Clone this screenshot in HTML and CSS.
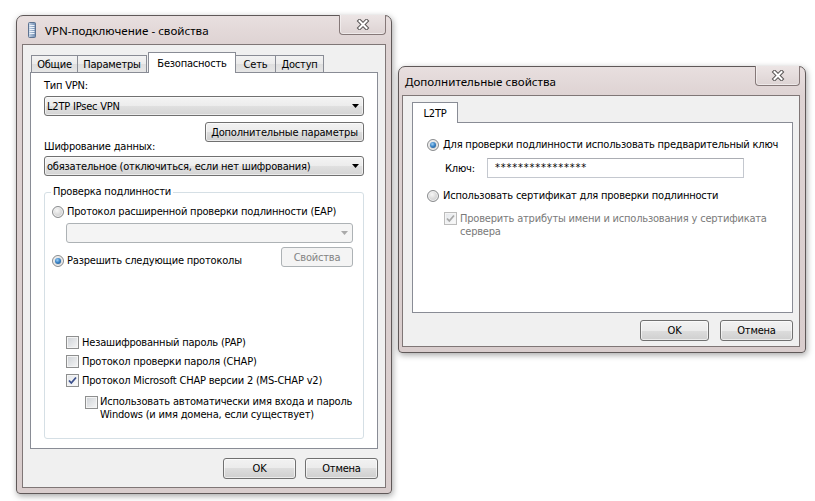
FILE: index.html
```html
<!DOCTYPE html>
<html lang="ru">
<head>
<meta charset="utf-8">
<title>VPN-подключение - свойства</title>
<link rel="stylesheet" href="styles.css">
</head>
<body>
<div class="window win-main">
  <div class="titlebar">
    <svg class="app-icon" width="8" height="16" viewBox="0 0 8 16">
      <defs>
        <linearGradient id="ig" x1="0" y1="0" x2="1" y2="0">
          <stop offset="0" stop-color="#c9d7e8"/>
          <stop offset="1" stop-color="#6d8bb1"/>
        </linearGradient>
      </defs>
      <rect x="0.5" y="0.5" width="7" height="15" rx="1" fill="url(#ig)" stroke="#5d7391"/>
      <path d="M1.5 3.5H6.5M1.5 5.5H6.5M1.5 7.5H6.5M1.5 9.5H6.5M1.5 11.5H6.5" stroke="#eef4fb" stroke-width="1"/>
    </svg>
    <span class="title">VPN-подключение - свойства</span>
    <div class="close-btn">
      <svg width="14" height="11" viewBox="0 0 14 11">
        <path d="M3.5 2 L10.5 9 M10.5 2 L3.5 9" stroke="#5a5656" stroke-width="4" stroke-linecap="square"/>
        <path d="M3.5 2 L10.5 9 M10.5 2 L3.5 9" stroke="#ffffff" stroke-width="2" stroke-linecap="square"/>
      </svg>
    </div>
  </div>
  <div class="client">
    <div class="tabs">
      <div class="tab tab-general">Общие</div>
      <div class="tab tab-params">Параметры</div>
      <div class="tab tab-security active">Безопасность</div>
      <div class="tab tab-net">Сеть</div>
      <div class="tab tab-access">Доступ</div>
    </div>
    <div class="panel panel-security">
      <div class="label">Тип VPN:</div>
      <div class="combo">
        <span class="combo-text">L2TP IPsec VPN</span>
        <svg class="arrow" width="7" height="4" viewBox="0 0 7 4"><polygon points="0,0 7,0 3.5,4" fill="#000"/></svg>
      </div>
      <div class="btn-row"><div class="btn btn-advanced">Дополнительные параметры</div></div>
      <div class="label label-enc">Шифрование данных:</div>
      <div class="combo combo-enc">
        <span class="combo-text">обязательное (отключиться, если нет шифрования)</span>
        <svg class="arrow" width="7" height="4" viewBox="0 0 7 4"><polygon points="0,0 7,0 3.5,4" fill="#000"/></svg>
      </div>
      <div class="group">
        <span class="legend">Проверка подлинности</span>
        <div class="radio-row"><span class="radio"></span><span>Протокол расширенной проверки подлинности (EAP)</span></div>
        <div class="combo combo-disabled combo-eap">
          <svg class="arrow" width="7" height="4" viewBox="0 0 7 4"><polygon points="0,0 7,0 3.5,4" fill="#a9a9a9"/></svg>
        </div>
        <div class="allow-row">
          <div class="radio-row allow-label"><span class="radio checked"></span><span>Разрешить следующие протоколы</span></div>
          <div class="btn btn-disabled btn-props">Свойства</div>
        </div>
        <div class="checks">
          <div class="check-row"><span class="checkbox"></span><span>Незашифрованный пароль (PAP)</span></div>
          <div class="check-row"><span class="checkbox"></span><span>Протокол проверки пароля (CHAP)</span></div>
          <div class="check-row"><span class="checkbox checked">
            <svg width="11" height="11" viewBox="0 0 11 11"><path d="M2 5.5 L4.3 8 L9 2.5" fill="none" stroke="#3b4f8c" stroke-width="1.8"/></svg>
          </span><span>Протокол Microsoft CHAP версии 2 (MS-CHAP v2)</span></div>
        </div>
        <div class="check-row nested"><span class="checkbox"></span><span class="multi">Использовать автоматически имя входа и пароль<br>Windows (и имя домена, если существует)</span></div>
      </div>
    </div>
    <div class="dlg-buttons">
      <div class="btn btn-dlg">OK</div>
      <div class="btn btn-dlg">Отмена</div>
    </div>
  </div>
</div>

<div class="window win-adv">
  <div class="titlebar">
    <span class="title">Дополнительные свойства</span>
    <div class="close-btn">
      <svg width="14" height="11" viewBox="0 0 14 11">
        <path d="M3.5 2 L10.5 9 M10.5 2 L3.5 9" stroke="#5a5656" stroke-width="4" stroke-linecap="square"/>
        <path d="M3.5 2 L10.5 9 M10.5 2 L3.5 9" stroke="#ffffff" stroke-width="2" stroke-linecap="square"/>
      </svg>
    </div>
  </div>
  <div class="client">
    <div class="tabs">
      <div class="tab tab-l2tp active">L2TP</div>
    </div>
    <div class="panel panel-l2tp">
      <div class="radio-row"><span class="radio checked"></span><span>Для проверки подлинности использовать предварительный ключ</span></div>
      <div class="key-row">
        <span class="key-label">Ключ:</span>
        <div class="textbox">****************</div>
      </div>
      <div class="radio-row cert-row"><span class="radio"></span><span>Использовать сертификат для проверки подлинности</span></div>
      <div class="check-row verify-row"><span class="checkbox checkbox-disabled checked">
        <svg width="11" height="11" viewBox="0 0 11 11"><path d="M2 5.5 L4.3 8 L9 2.5" fill="none" stroke="#a8a8a8" stroke-width="1.8"/></svg>
      </span><span class="multi disabled-text">Проверить атрибуты имени и использования у сертификата<br>сервера</span></div>
    </div>
    <div class="dlg-buttons">
      <div class="btn btn-dlg btn-ok">OK</div>
      <div class="btn btn-dlg btn-cancel">Отмена</div>
    </div>
  </div>
</div>
</body>
</html>
```

FILE: styles.css
```css
* { box-sizing: border-box; }
html, body { margin: 0; padding: 0; }
body {
  width: 815px;
  height: 501px;
  background: #ffffff;
  position: relative;
  overflow: hidden;
  font-family: "DejaVu Sans Condensed", "Liberation Sans", Arial, sans-serif;
  font-size: 11px;
  letter-spacing: -0.2px;
  color: #000;
}

/* ---------- windows ---------- */
.window {
  position: absolute;
  display: flex;
  flex-direction: column;
  border: 1px solid #5f5858;
  border-radius: 7px 7px 4px 4px;
  background: linear-gradient(#e8dfdf, #ded3d3 28px, #d9cdcd);
  box-shadow: 1px 2px 6px rgba(0, 0, 0, 0.35);
}
.win-main { left: 16px; top: 15px; width: 376px; height: 479px; }
.win-adv { left: 398px; top: 66px; width: 408px; height: 287px; }

.titlebar {
  height: 28px;
  flex: none;
  position: relative;
  display: flex;
  align-items: center;
  padding-left: 11px;
  font-family: "Noto Sans", "Open Sans", sans-serif;
  font-size: 11.6px;
  letter-spacing: 0;
  color: #000;
}
.win-adv .titlebar { padding-left: 6px; }
.app-icon { flex: none; margin-right: 9px; }
.title { line-height: 16px; padding-top: 1px; }

.close-btn {
  position: absolute;
  top: -1px;
  right: 5px;
  width: 47px;
  height: 20px;
  border: 1px solid #857878;
  border-top: none;
  border-radius: 0 0 4px 4px;
  background: linear-gradient(#ece5e5, #ddd3d3);
  box-shadow: inset 0 -1px 0 rgba(255, 255, 255, 0.5), inset 1px 0 0 rgba(255,255,255,0.45);
  display: flex;
  align-items: center;
  justify-content: center;
}
.win-adv .close-btn { width: 45px; right: 5px; }

.client {
  flex: 1;
  margin: 0 5px 5px;
  border: 1px solid #7f7676;
  background: #f0f0f0;
  display: flex;
  flex-direction: column;
}
.win-main .client { padding: 7px 7px 8px; }
.win-adv .client { margin-left: 3px; padding: 6px 6px 5px 9px; }

/* ---------- tabs ---------- */
.tabs {
  height: 20px;
  flex: none;
  display: flex;
  align-items: flex-end;
  padding-left: 1px;
}
.win-adv .tabs { padding-left: 0; }
.tab {
  height: 17px;
  border: 1px solid #898c95;
  border-bottom: none;
  background: linear-gradient(#f3f3f3, #ebebeb 50%, #dedede 50%, #e6e6e6);
  display: flex;
  align-items: center;
  justify-content: center;
  margin-left: -1px;
  white-space: nowrap;
}
.tab.active {
  height: 21px;
  margin-bottom: -1px;
  background: #fff;
  position: relative;
  z-index: 1;
}
.tab-general { width: 47px; margin-left: 0; }
.tab-params { width: 70px; }
.tab-security { width: 88px; margin-left: 1px; }
.tab-net { width: 41px; }
.tab-access { width: 49px; }
.tab-l2tp { width: 46px; margin-left: 0; }

.panel {
  flex: 1;
  background: #fff;
  border: 1px solid #898c95;
}
.panel-security { padding: 5px 13px 0 13px; }
.panel-l2tp { padding: 14px 0 0 14px; }

/* ---------- controls ---------- */
.label { line-height: 15px; height: 15px; }
.label-enc { margin-top: -3px; }

.combo {
  height: 20px;
  margin-top: 3px;
  border: 1px solid #707070;
  border-radius: 3px;
  background: linear-gradient(#f4f4f4, #ececec 50%, #e0e0e0 50%, #d4d4d4);
  box-shadow: inset 0 0 0 1px rgba(255, 255, 255, 0.55);
  display: flex;
  align-items: center;
  padding: 0 4px 0 2px;
}
.combo-enc { margin-top: 2px; }
.combo-text { flex: 1; white-space: nowrap; }
.arrow { margin-left: auto; flex: none; }
.combo-disabled {
  border-color: #adb2b5;
  background: #f4f4f4;
  box-shadow: none;
}
.combo-eap { margin: 4px 0 0 14px; }

.btn {
  height: 20px;
  border: 1px solid #707070;
  border-radius: 3px;
  background: linear-gradient(#f2f2f2, #ebebeb 50%, #dddddd 50%, #cfcfcf);
  box-shadow: inset 0 0 0 1px rgba(255, 255, 255, 0.6);
  display: flex;
  align-items: center;
  justify-content: center;
  white-space: nowrap;
}
.btn-row { display: flex; justify-content: flex-end; margin-top: 6px; }
.btn-advanced { width: 159px; }
.btn-disabled {
  border-color: #adb2b5;
  background: #f4f4f4;
  box-shadow: none;
  color: #838383;
}
.btn-props { width: 72px; margin-left: auto; }

.dlg-buttons {
  flex: none;
  display: flex;
  justify-content: flex-end;
  gap: 9px;
  margin-top: 9px;
}
.btn-dlg { width: 73px; height: 21px; }
.win-adv .dlg-buttons { margin-top: 7px; gap: 11px; }
.win-adv .btn-ok { width: 69px; }

/* ---------- group box ---------- */
.group {
  position: relative;
  margin-top: 16px;
  height: 247px;
  border: 1px solid #d5dfe5;
  border-radius: 3px;
  padding: 11px 10px 0 7px;
}
.legend {
  position: absolute;
  left: 6px;
  top: -9px;
  padding: 0 2px;
  line-height: 15px;
  background: #fff;
}

.radio-row {
  display: flex;
  align-items: center;
  height: 15px;
  gap: 3px;
  white-space: nowrap;
}
.panel-l2tp .radio-row { gap: 4px; }
.radio {
  flex: none;
  width: 12px;
  height: 12px;
  border-radius: 50%;
  border: 1px solid #8a8c8e;
  background: radial-gradient(circle at 40% 35%, #f7f7f7 0, #dcdcdc 45%, #c4c6c8 100%);
  box-shadow: inset 0 0 0 1px #f2f2f2;
  position: relative;
}
.radio.checked::after {
  content: "";
  position: absolute;
  left: 2px;
  top: 2px;
  width: 6px;
  height: 6px;
  border-radius: 50%;
  background: radial-gradient(circle at 40% 35%, #9fd0f5 0, #3d86c8 45%, #164b82 100%);
}

.allow-row {
  display: flex;
  align-items: flex-start;
  margin-top: 4px;
}
.allow-label { margin-top: 6px; }

.checks {
  display: flex;
  flex-direction: column;
  gap: 4px;
  margin-top: 67px;
}
.check-row {
  display: flex;
  align-items: center;
  height: 15px;
  gap: 3px;
  padding-left: 14px;
  white-space: nowrap;
}
.checkbox {
  flex: none;
  width: 13px;
  height: 13px;
  border: 1px solid #8e8f8f;
  background: linear-gradient(135deg, #cdd1d6, #f6f6f6);
  box-shadow: inset 0 0 0 1px #f4f4f4;
  display: flex;
  align-items: center;
  justify-content: center;
}
.checkbox.checked { background: linear-gradient(135deg, #e3e6ea, #fbfbfb); }
.checkbox-disabled { border-color: #bcbcbc; background: #f4f4f4; }

.nested {
  height: auto;
  align-items: flex-start;
  margin-top: 7px;
  padding-left: 33px;
  gap: 2px;
}
.nested .checkbox { margin-top: 1px; }
.multi { line-height: 13px; }

/* ---------- L2TP panel ---------- */
.key-row {
  display: flex;
  align-items: center;
  height: 20px;
  margin-top: 6px;
  padding-left: 18px;
}
.key-label { width: 42px; flex: none; }
.textbox {
  width: 257px;
  height: 20px;
  border: 1px solid #c4c8cf;
  border-top-color: #abadb3;
  background: #fff;
  padding-left: 7px;
  line-height: 18px;
  letter-spacing: 0.8px;
}
.cert-row { margin-top: 10px; }
.verify-row {
  height: auto;
  align-items: flex-start;
  margin-top: 9px;
  padding-left: 17px;
}
.verify-row .checkbox { margin-top: 0; }
.disabled-text { color: #7a7a7a; }
```
